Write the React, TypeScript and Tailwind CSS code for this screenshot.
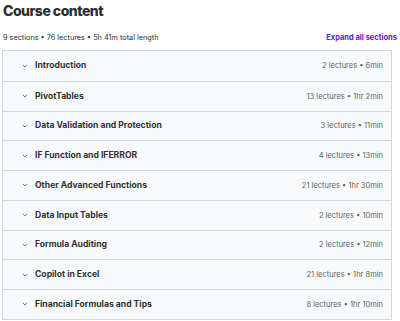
import React from "react";

const rows: [string, string][] = [
  ["Introduction", "2 lectures • 6min"],
  ["PivotTables", "13 lectures • 1hr 2min"],
  ["Data Validation and Protection", "3 lectures • 11min"],
  ["IF Function and IFERROR", "4 lectures • 13min"],
  ["Other Advanced Functions", "21 lectures • 1hr 30min"],
  ["Data Input Tables", "2 lectures • 10min"],
  ["Formula Auditing", "2 lectures • 12min"],
  ["Copilot in Excel", "21 lectures • 1hr 8min"],
  ["Financial Formulas and Tips", "8 lectures • 1hr 10min"],
];

function Chevron() {
  return (
    <svg width="6" height="4" viewBox="0 0 6 4" className="shrink-0">
      <path d="M0.8 0.8 L3 3 L5.2 0.8" fill="none" stroke="#6a6f73" strokeWidth="0.9" />
    </svg>
  );
}

export default function App() {
  return (
    <div className="w-[400px] h-[321px] bg-white overflow-hidden text-[#2d2f31]" style={{ fontFamily: "Inter, 'Liberation Sans', sans-serif" }}>
      <div className="pl-[3px] pt-[1px] text-[14px] font-extrabold leading-[20px] tracking-[-0.5px]">Course content</div>
      <div className="flex items-center justify-between pl-[3px] pr-[3px] mt-[12px] h-[10px]">
        <span className="text-[7.3px] text-[#2d2f31]">9 sections • 76 lectures • 5h 41m total length</span>
        <span className="text-[7.5px] font-bold text-[#5b23c9]">Expand all sections</span>
      </div>
      <div className="ml-[2px] mt-[7px] w-[390px] border border-[#d1d7dc] bg-[#f7f9fa]">
        {rows.map(([t, m], i) => (
          <div
            key={t}
            className={`flex items-center h-[29.75px] pl-[19px] pr-[8px] ${i > 0 ? "border-t border-[#d1d7dc]" : ""}`}
          >
            <Chevron />
            <span className="ml-[7px] text-[8.6px] font-bold flex-1 text-[#303234]">{t}</span>
            <span className="text-[7.5px] text-[#5f6468]">{m}</span>
          </div>
        ))}
      </div>
    </div>
  );
}
